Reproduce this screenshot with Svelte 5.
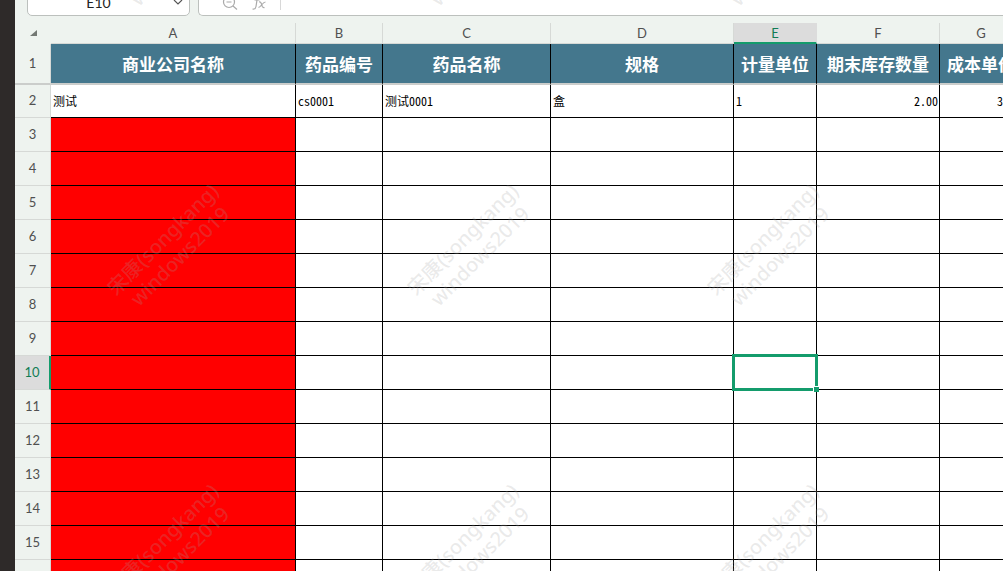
<script>
    const columns = [
        { id: 'A', width: 245, title: '商业公司名称' },
        { id: 'B', width: 87, title: '药品编号' },
        { id: 'C', width: 168, title: '药品名称' },
        { id: 'D', width: 183, title: '规格' },
        { id: 'E', width: 83, title: '计量单位' },
        { id: 'F', width: 123, title: '期末库存数量', numeric: true },
        { id: 'G', width: 83, title: '成本单价', numeric: true }
    ];

    const record = { A: '测试', B: 'cs0001', C: '测试0001', D: '盒', E: '1', F: '2.00', G: '3.00' };
    const rows = Array.from({ length: 15 }, (_, i) => ({ no: i + 2, cells: i === 0 ? record : {} }));
    const tiles = Array.from({ length: 12 });

    let selected = $state({ col: 'E', row: 10 });
    let cellName = $derived(selected.col + selected.row);
</script>

<div class="app">
    <aside class="rail"></aside>
    <main>
        <div class="toolbar">
            <div class="name-box">
                <input aria-label="名称框" type="text" value={cellName} />
                <button aria-label="展开">
                    <svg width="10" height="6" viewBox="0 0 10 6"><path d="M1 1l4 4 4-4" /></svg>
                </button>
            </div>
            <div class="formula-box">
                <button aria-label="缩小">
                    <svg width="16" height="16" viewBox="0 0 16 16">
                        <circle cx="7" cy="8" r="5.5" />
                        <path d="M4.5 8h5M11 12l4 3.500" />
                    </svg>
                </button>
                <button aria-label="插入函数">
                    <svg width="16" height="16" viewBox="0 0 16 16">
                        <path d="M10 1.500Q7 0 6.300 4L5 12.500Q4.500 15.500 1.500 15M3.500 6h5" />
                        <path d="M8 8q1.500-.5 2.300 1.500l1 3q.8 1.500 2.200 1M14.500 8q-1.500 0-3.500 2.500T7.500 13.500" />
                    </svg>
                </button>
                <input aria-label="编辑栏" type="text" value="" />
            </div>
        </div>

        <div class="sheet">
            <table>
                <colgroup>
                    <col style="width: 36px" />
                    {#each columns as col}
                        <col style="width: {col.width}px" />
                    {/each}
                </colgroup>
                <thead>
                    <tr class="letters">
                        <th class="corner"><svg width="7" height="6" viewBox="0 0 7 6"><path d="M7 0v6H0z" /></svg></th>
                        {#each columns as col}
                            <th scope="col" class:active={col.id === selected.col}>{col.id}</th>
                        {/each}
                    </tr>
                </thead>
                <tbody>
                    <tr class="titles">
                        <th scope="row">1</th>
                        {#each columns as col}
                            <td>{col.title}</td>
                        {/each}
                    </tr>
                    {#each rows as row}
                        <tr class:first={row.no === 2}>
                            <th scope="row" class:active={row.no === selected.row}>{row.no}</th>
                            {#each columns as col}
                                <td
                                    class:numeric={col.numeric}
                                    class:missing={col.id === 'A' && !row.cells.A}
                                    onclick={() => (selected = { col: col.id, row: row.no })}
                                >
                                    {row.cells[col.id] ?? ''}
                                    {#if col.id === selected.col && row.no === selected.row}
                                        <div class="selection"></div>
                                    {/if}
                                </td>
                            {/each}
                        </tr>
                    {/each}
                </tbody>
            </table>
        </div>
    </main>

    <div class="watermark">
        <div class="tiles">
            {#each tiles as _}
                <div class="tile"><p>宋康(songkang)<br />windows2019</p></div>
            {/each}
        </div>
    </div>
</div>

<style>
    :global(body) {
        margin: 0;
        background: #eef3ef;
    }

    .app {
        position: relative;
        display: flex;
        height: 100vh;
        overflow: hidden;
        font-family: Lato, "Noto Sans CJK SC", sans-serif;
        font-size: 13px;
        color: #505050;
    }

    .rail {
        flex: 0 0 15px;
        background: #2e2a29;
    }

    main {
        flex: 1;
        min-width: 0;
        background: #eef3ef;
    }

    .toolbar {
        display: flex;
        align-items: flex-end;
        gap: 8px;
        height: 16px;
        padding-left: 12px;
        margin-bottom: 7px;
        overflow: hidden;
    }

    .name-box,
    .formula-box {
        display: flex;
        align-items: center;
        box-sizing: border-box;
        min-width: 0;
        height: 28px;
        border: 1px solid #bcc0bd;
        border-radius: 5px;
        background: #fff;
    }

    .name-box {
        flex: 0 0 163px;
        padding-right: 6px;
    }

    .formula-box {
        flex: 1;
        gap: 13px;
        padding-left: 23px;
        border-right: none;
        border-radius: 5px 0 0 5px;
    }

    input {
        flex: 1;
        min-width: 0;
        height: 16px;
        padding: 0;
        border: none;
        outline: none;
        background: none;
        font: inherit;
        font-size: 14px;
        color: #222;
    }

    .name-box input {
        padding-right: 4px;
        text-align: center;
    }

    .formula-box input {
        border-left: 1px solid #d8d8d8;
    }

    button {
        display: flex;
        padding: 0;
        border: none;
        background: none;
    }

    button svg {
        fill: none;
        stroke: #aaa;
        stroke-width: 1.2;
    }

    .name-box svg {
        stroke: #555;
    }

    .sheet {
        overflow: hidden;
    }

    table {
        width: 1008px;
        table-layout: fixed;
        border-collapse: separate;
        border-spacing: 0;
    }

    th,
    td {
        box-sizing: border-box;
        height: 34px;
        padding: 0;
        line-height: 16px;
    }

    th {
        border-right: 1px solid #d6d9d6;
        border-bottom: 1px solid #d6d9d6;
        background: #eef3ef;
        font-weight: 400;
        text-align: center;
    }

    tbody th {
        padding-bottom: 2px;
    }

    th.active {
        background: #dcdcdc;
        color: #107c54;
    }

    tbody th.active {
        border-right: 2px solid #149c6c;
    }

    .letters th {
        height: 21px;
    }

    .letters .corner {
        border-color: #eef3ef;
    }

    .corner svg {
        display: block;
        margin-left: 15px;
        fill: #737873;
    }

    .letters th.active {
        border-right-color: #dcdcdc;
        border-bottom: 2px solid #149c6c;
    }

    td {
        position: relative;
        padding: 0 2px;
        border-right: 1px solid #000;
        border-bottom: 1px solid #000;
        background: #fff;
        font-family: "Noto Sans CJK SC", sans-serif;
        font-size: 12px;
        font-feature-settings: "hwid";
        color: #000;
        white-space: nowrap;
    }

    td.numeric {
        padding: 0 1px;
        text-align: right;
    }

    td.missing {
        background: #f00;
    }

    .titles th,
    .titles td {
        height: 41px;
        border-bottom: 2px solid #cbcdcb;
    }

    .titles td {
        background: #44778d;
        color: #fff;
        font-size: 17px;
        font-weight: 700;
        text-align: center;
    }

    .first th,
    .first td {
        height: 33px;
    }

    .selection {
        position: absolute;
        inset: -2px;
        z-index: 1;
        border: 3px solid #149c6c;
    }

    .selection::after {
        content: "";
        position: absolute;
        right: -4px;
        bottom: -4px;
        width: 5px;
        height: 5px;
        background: #149c6c;
        box-shadow: -1px -1px 0 #fff;
    }

    .watermark {
        position: absolute;
        inset: 0;
        z-index: 2;
        overflow: hidden;
        pointer-events: none;
    }

    .tiles {
        position: absolute;
        top: -202px;
        left: 21px;
        display: grid;
        grid-template-columns: repeat(4, 300px);
        grid-auto-rows: 300px;
    }

    .tile {
        display: grid;
        place-items: center;
    }

    .tile p {
        margin: 0;
        font-family: "Noto Sans", "Noto Sans CJK SC", sans-serif;
        font-size: 20px;
        font-weight: 500;
        line-height: 24px;
        text-align: center;
        color: rgba(160, 160, 160, 0.22);
        transform: rotate(-45deg);
    }
</style>
